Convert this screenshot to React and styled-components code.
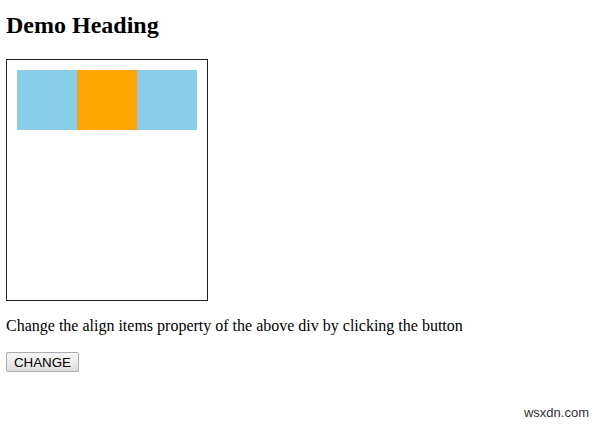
import React from "react";
import styled, { createGlobalStyle } from "styled-components";

const GlobalStyle = createGlobalStyle`
  html, body {
    margin: 0;
    padding: 0;
    background: #fff;
  }
  body {
    font-family: "Liberation Serif", "Times New Roman", serif;
    color: #000;
  }
`;

const Page = styled.div`
  position: relative;
  width: 600px;
  height: 425px;
  padding: 0 6px;
  box-sizing: border-box;
  overflow: hidden;
`;

const Heading = styled.h2`
  margin: 12px 0 20px;
  font-size: 24px;
  font-weight: bold;
  line-height: normal;
`;

const FlexBox = styled.div`
  display: flex;
  align-items: ${(p) => p.$align};
  width: 180px;
  height: 220px;
  padding: 10px;
  border: 1px solid #222;
`;

const Item = styled.div`
  width: 60px;
  height: 60px;
  flex: none;
  background: ${(p) => p.$color};
`;

const Note = styled.p`
  margin: 16px 0 17px;
  font-size: 16px;
  line-height: normal;
`;

const Button = styled.button`
  display: block;
  height: 20px;
  width: 73px;
  padding: 0;
  font-family: "Liberation Sans", Arial, sans-serif;
  font-size: 13.33px;
  color: #000;
  background: linear-gradient(#f4f4f4, #ececec 50%, #dcdcdc);
  border: 1px solid #acacac;
  border-radius: 2px;
  cursor: pointer;
`;

const Watermark = styled.span`
  position: absolute;
  right: 11px;
  bottom: 5px;
  font-family: "Liberation Sans", Arial, sans-serif;
  font-size: 13px;
  color: #333;
`;

const items = ["#87ceeb", "#ffa500", "#87ceeb"];

export default function App() {
  const [align, setAlign] = React.useState("flex-start");
  return (
    <>
      <GlobalStyle />
      <Page>
        <Heading>Demo Heading</Heading>
        <FlexBox $align={align}>
          {items.map((c, i) => (
            <Item key={i} $color={c} />
          ))}
        </FlexBox>
        <Note>Change the align items property of the above div by clicking the button</Note>
        <Button onClick={() => setAlign(align === "flex-start" ? "center" : "flex-start")}>
          CHANGE
        </Button>
        <Watermark>wsxdn.com</Watermark>
      </Page>
    </>
  );
}
